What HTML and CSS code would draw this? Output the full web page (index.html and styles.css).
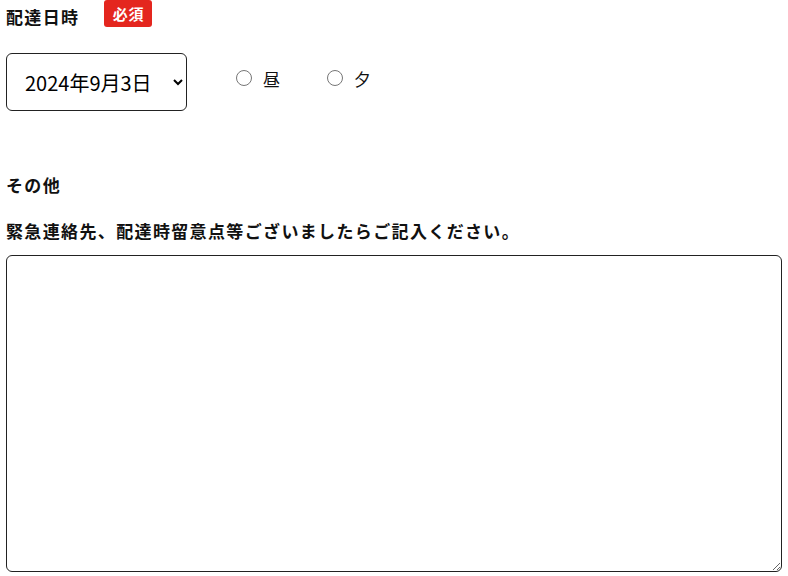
FILE: index.html
```html
<!DOCTYPE html>
<html lang="ja">
<head>
  <meta charset="UTF-8" />
  <meta name="viewport" content="width=device-width, initial-scale=1.0" />
  <title>配達日時</title>
  <link rel="stylesheet" href="styles.css">
</head>
<body>
  <form class="order-form">
    <div class="field-head">
      <span class="field-label">配達日時</span>
      <span class="badge">必須</span>
    </div>

    <div class="date-row">
      <select class="date-select">
        <option>2024年9月3日</option>
        <option>2024年9月4日</option>
        <option>2024年9月5日</option>
      </select>
      <label class="radio"><input type="radio" name="time" /> 昼</label>
      <label class="radio"><input type="radio" name="time" /> 夕</label>
    </div>

    <div class="other">
      <p class="field-label">その他</p>
      <p class="field-label desc">緊急連絡先、配達時留意点等ございましたらご記入ください。</p>
      <textarea class="note"></textarea>
    </div>
  </form>
</body>
</html>
```

FILE: styles.css
```css
* { box-sizing: border-box; }

body {
  margin: 0;
  padding: 0 6px;
  font-family: "Noto Sans CJK JP", "Noto Sans", sans-serif;
  color: #111;
  background: #fff;
}

.field-head {
  display: flex;
  align-items: center;
  height: 27px;
}

.field-label {
  margin: 0;
  font-size: 17px;
  font-weight: 700;
  line-height: 24px;
  letter-spacing: 0.08em;
}

.field-head .field-label {
  margin-top: 6px;
}

.badge {
  margin-left: 25px;
  width: 48px;
  height: 27px;
  background: #e4261e;
  color: #fff;
  font-size: 15px;
  font-weight: 700;
  border-radius: 3px;
  display: flex;
  align-items: center;
  justify-content: center;
  letter-spacing: 0.05em;
}

.date-row {
  display: flex;
  align-items: center;
  margin-top: 26px;
}

.date-select {
  width: 181px;
  height: 58px;
  padding: 0 10px 0 14px;
  font-family: inherit;
  font-size: 20px;
  color: #000;
  background: #fff;
  border: 1px solid #222;
  border-radius: 6px;
}

.radio {
  display: flex;
  align-items: center;
  margin-left: 49px;
  margin-top: -8px;
  font-size: 17px;
  letter-spacing: 0.1em;
}

.radio + .radio {
  margin-left: 45px;
}

.radio input {
  width: 16px;
  height: 16px;
  margin: 0 11px 0 0;
}

.other {
  margin-top: 62px;
}

.desc {
  margin-top: 22px;
}

.note {
  display: block;
  width: 776px;
  height: 317px;
  margin-top: 12px;
  border: 1px solid #222;
  border-radius: 6px;
  resize: both;
}
```
